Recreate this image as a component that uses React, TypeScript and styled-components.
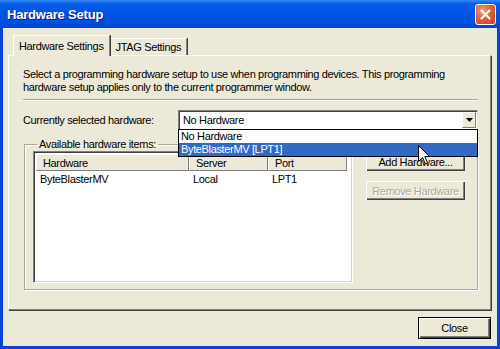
import styled, { createGlobalStyle } from 'styled-components';

const Global = createGlobalStyle`
  html, body { margin: 0; padding: 0; background: #fff; }
  body {
    font-family: 'Liberation Sans', Arial, sans-serif;
    font-size: 11px;
    letter-spacing: -0.35px;
    color: #000;
  }
`;

const Window = styled.div`
  position: relative;
  width: 500px;
  height: 349px;
  display: flex;
  flex-direction: column;
  background: #0842d8;
  overflow: hidden;
`;

const TitleBar = styled.div`
  height: 28px;
  flex: none;
  display: flex;
  align-items: center;
  justify-content: space-between;
  padding: 0 4px 0 7px;
  background: linear-gradient(#3a8cf8 0%, #0a5fea 12%, #0053e6 45%, #0050e0 80%, #0047cc 100%);
`;

const Title = styled.div`
  color: #fff;
  font-weight: bold;
  font-size: 13px;
  letter-spacing: -0.2px;
  text-shadow: 1px 1px 0 #0a1f80;
`;

const CloseX = styled.div`
  width: 21px;
  height: 21px;
  box-sizing: border-box;
  border: 1px solid #fff;
  border-radius: 3px;
  background: radial-gradient(circle at 35% 30%, #f0a080 0%, #e0603c 45%, #c4401c 100%);
  display: flex;
  align-items: center;
  justify-content: center;
`;

const Body = styled.div`
  flex: 1;
  margin: 0 3px 3px 3px;
  background: #ece9d8;
  padding: 7px 6px 0 5px;
  display: flex;
  flex-direction: column;
`;

const TabsRow = styled.div`
  display: flex;
  align-items: flex-end;
  height: 20px;
  padding-left: 5px;
`;

const Tab = styled.div<{ active?: boolean }>`
  box-sizing: border-box;
  height: ${({ active }) => (active ? 21 : 17)}px;
  margin-bottom: ${({ active }) => (active ? -1 : 0)}px;
  padding: 0 ${({ active }) => (active ? 5 : 5)}px;
  display: flex;
  align-items: center;
  background: #ece9d8;
  border-top: 1px solid #fff;
  border-left: 1px solid #fff;
  border-right: 1px solid #808080;
  box-shadow: 1px 0 0 #404040;
  position: relative;
  z-index: ${({ active }) => (active ? 2 : 1)};
  white-space: nowrap;
`;

const Panel = styled.div`
  box-sizing: border-box;
  height: 255px;
  border-top: 1px solid #fff;
  border-left: 1px solid #fff;
  border-right: 1px solid #808080;
  border-bottom: 1px solid #808080;
  box-shadow: 1px 1px 0 #404040;
  padding: 12px 12px 0 14px;
  display: flex;
  flex-direction: column;
`;

const Intro = styled.p`
  margin: 0;
  line-height: 13px;
`;

const Separator = styled.div`
  margin-top: 5px;
  border-top: 1px solid #aca899;
  border-bottom: 1px solid #fff;
`;

const ComboRow = styled.div`
  margin-top: 9px;
  height: 20px;
  display: flex;
  align-items: center;
`;

const Label = styled.div`
  width: 155px;
  flex: none;
`;

const Combo = styled.div`
  position: relative;
  flex: 1;
  height: 20px;
  box-sizing: border-box;
  background: #fff;
  border-top: 1px solid #808080;
  border-left: 1px solid #808080;
  border-right: 1px solid #e6e4da;
  border-bottom: 1px solid #e6e4da;
  box-shadow: inset 1px 1px 0 #404040;
  display: flex;
  align-items: center;
  padding-left: 4px;
  z-index: 5;
`;

const ComboText = styled.div`
  flex: 1;
`;

const ArrowBtn = styled.div`
  width: 14px;
  height: 16px;
  margin-right: 1px;
  box-sizing: border-box;
  background: #ece9d8;
  border-top: 1px solid #fff;
  border-left: 1px solid #fff;
  border-right: 1px solid #808080;
  border-bottom: 1px solid #808080;
  display: flex;
  align-items: center;
  justify-content: center;
`;

const DropList = styled.div`
  position: absolute;
  top: 100%;
  left: -1px;
  right: -1px;
  background: #fff;
  border: 1px solid #000;
  box-sizing: border-box;
`;

const DropItem = styled.div<{ selected?: boolean }>`
  height: 13px;
  line-height: 13px;
  padding-left: 2px;
  background: ${({ selected }) => (selected ? '#316ac5' : '#fff')};
  color: ${({ selected }) => (selected ? '#fff' : '#000')};
`;

const Group = styled.fieldset`
  margin: 8px 0 0 1px;
  padding: 0 10px 0 8px;
  height: 152px;
  box-sizing: border-box;
  border: 1px solid #aca899;
  box-shadow: 1px 1px 0 #fff, inset 1px 1px 0 #fff;
  min-width: 0;
`;

const Legend = styled.legend`
  padding: 0 2px;
  margin-left: 4px;
  line-height: 13px;
`;

const GroupInner = styled.div`
  display: flex;
  gap: 12px;
`;

const ListView = styled.div`
  width: 320px;
  height: 132px;
  box-sizing: border-box;
  background: #fff;
  border-top: 1px solid #808080;
  border-left: 1px solid #808080;
  border-right: 1px solid #fff;
  border-bottom: 1px solid #fff;
  box-shadow: inset 1px 1px 0 #404040, inset -1px -1px 0 #d4d0c8;
  padding: 2px;
`;

const HeaderRow = styled.div`
  display: flex;
  height: 17px;
`;

const HeadCell = styled.div<{ w: number }>`
  width: ${({ w }) => w}px;
  box-sizing: border-box;
  background: #ece9d8;
  border-top: 1px solid #fff;
  border-left: 1px solid #fff;
  border-right: 1px solid #808080;
  border-bottom: 1px solid #808080;
  padding-left: 6px;
  display: flex;
  align-items: center;
`;

const Row = styled.div`
  display: flex;
  height: 14px;
  margin-top: 1px;
  align-items: center;
`;

const Cell = styled.div<{ w: number }>`
  width: ${({ w }) => w}px;
  padding-left: 4px;
  box-sizing: border-box;
`;

const Buttons = styled.div`
  display: flex;
  flex-direction: column;
  gap: 8px;
`;

const Button = styled.div<{ disabled?: boolean; isDefault?: boolean; w?: number; h?: number }>`
  width: ${({ w }) => w ?? 101}px;
  height: ${({ h }) => h ?? 21}px;
  box-sizing: border-box;
  background: #ece9d8;
  border: 1px solid ${({ isDefault }) => (isDefault ? '#000' : 'transparent')};
  box-shadow: inset 1px 1px 0 #fff, inset -1px -1px 0 #404040, inset -2px -2px 0 #808080;
  color: ${({ disabled }) => (disabled ? '#aca899' : '#000')};
  text-shadow: ${({ disabled }) => (disabled ? '1px 1px 0 #fff' : 'none')};
  display: flex;
  align-items: center;
  justify-content: center;
`;

const Footer = styled.div`
  display: flex;
  justify-content: flex-end;
  padding-top: 7px;
`;

const Cursor = styled.svg`
  position: absolute;
  left: 418px;
  top: 145px;
  z-index: 20;
`;

export default function App() {
  return (
    <>
      <Global />
      <Window>
        <TitleBar>
          <Title>Hardware Setup</Title>
          <CloseX>
            <svg width="11" height="11" viewBox="0 0 11 11">
              <path d="M1.5 1.5 L9.5 9.5 M9.5 1.5 L1.5 9.5" stroke="#fff" strokeWidth="2" strokeLinecap="round" />
            </svg>
          </CloseX>
        </TitleBar>
        <Body>
          <TabsRow>
            <Tab active>Hardware Settings</Tab>
            <Tab>JTAG Settings</Tab>
          </TabsRow>
          <Panel>
            <Intro>
              Select a programming hardware setup to use when programming devices. This programming
              <br />
              hardware setup applies only to the current programmer window.
            </Intro>
            <Separator />
            <ComboRow>
              <Label>Currently selected hardware:</Label>
              <Combo>
                <ComboText>No Hardware</ComboText>
                <ArrowBtn>
                  <svg width="7" height="4" viewBox="0 0 7 4">
                    <path d="M0 0 H7 L3.5 4 Z" fill="#000" />
                  </svg>
                </ArrowBtn>
                <DropList>
                  <DropItem>No Hardware</DropItem>
                  <DropItem selected>ByteBlasterMV [LPT1]</DropItem>
                </DropList>
              </Combo>
            </ComboRow>
            <Group>
              <Legend>Available hardware items:</Legend>
              <GroupInner>
                <ListView>
                  <HeaderRow>
                    <HeadCell w={153}>Hardware</HeadCell>
                    <HeadCell w={79}>Server</HeadCell>
                    <HeadCell w={79}>Port</HeadCell>
                  </HeaderRow>
                  <Row>
                    <Cell w={153}>ByteBlasterMV</Cell>
                    <Cell w={79}>Local</Cell>
                    <Cell w={79}>LPT1</Cell>
                  </Row>
                </ListView>
                <Buttons>
                  <Button>Add Hardware...</Button>
                  <Button disabled>Remove Hardware</Button>
                </Buttons>
              </GroupInner>
            </Group>
          </Panel>
          <Footer>
            <Button isDefault w={73} h={22}>Close</Button>
          </Footer>
        </Body>
        <Cursor width="13" height="20" viewBox="0 0 13 20">
          <path d="M0.5 0.5 L0.5 16.5 L4.5 12.5 L7.5 19 L9.5 18 L6.8 11.5 L11.5 11.5 Z" fill="#fff" stroke="#000" strokeWidth="1" strokeLinejoin="miter" />
        </Cursor>
      </Window>
    </>
  );
}
